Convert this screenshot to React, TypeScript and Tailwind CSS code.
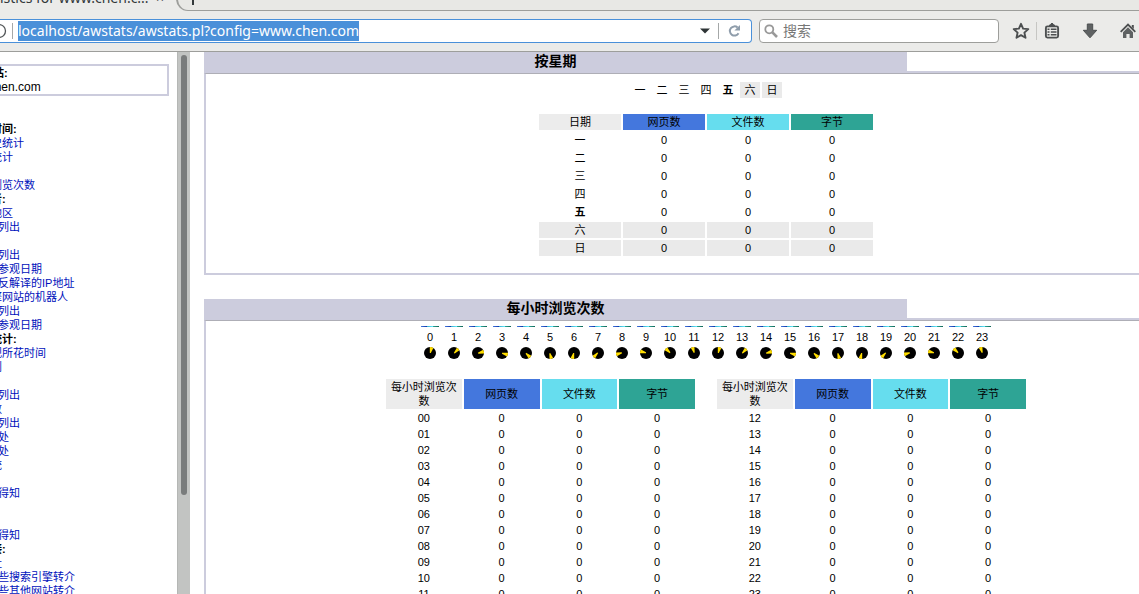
import type { ReactNode } from "react";

const DAYS = ["一", "二", "三", "四", "五", "六", "日"];
const HOURS = Array.from({ length: 24 }, (_, i) => i);

type Entry = { text: string; kind: "title" | "link" | "sub" };

const MENU: Entry[] = [
  { text: "按参观时间:", kind: "title" },
  { text: "按月历史统计", kind: "link" },
  { text: "按日期统计", kind: "link" },
  { text: "按星期", kind: "link" },
  { text: "每小时浏览次数", kind: "link" },
  { text: "按参观者:", kind: "title" },
  { text: "国家或地区", kind: "link" },
  { text: "全部列出", kind: "sub" },
  { text: "主机", kind: "link" },
  { text: "全部列出", kind: "sub" },
  { text: "最近参观日期", kind: "sub" },
  { text: "无法反解译的IP地址", kind: "sub" },
  { text: "搜索引擎网站的机器人", kind: "link" },
  { text: "全部列出", kind: "sub" },
  { text: "最近参观日期", kind: "sub" },
  { text: "浏览器统计:", kind: "title" },
  { text: "每次参观所花时间", kind: "link" },
  { text: "文件类别", kind: "link" },
  { text: "下载", kind: "link" },
  { text: "全部列出", kind: "sub" },
  { text: "浏览次数", kind: "link" },
  { text: "全部列出", kind: "sub" },
  { text: "入站处", kind: "sub" },
  { text: "出站处", kind: "sub" },
  { text: "操作系统", kind: "link" },
  { text: "版本", kind: "sub" },
  { text: "无法得知", kind: "sub" },
  { text: "浏览器", kind: "link" },
  { text: "版本", kind: "sub" },
  { text: "无法得知", kind: "sub" },
  { text: "反相链接:", kind: "title" },
  { text: "来源网址", kind: "link" },
  { text: "由那些搜索引擎转介", kind: "sub" },
  { text: "由那些其他网站转介", kind: "sub" },
];

function Toolbar() {
  return (
    <header className="shrink-0 border-b border-[#9d9e9b] bg-[#ebebe9] font-['Noto_Sans','Noto_Sans_CJK_SC',sans-serif] text-[14px] text-[#33393b]">
      {/* Tab strip */}
      <div className="flex h-[10px] items-end">
        <div className="mb-[2px] flex w-[176px] shrink-0 items-center justify-between pr-3 leading-[20px]">
          <span className="whitespace-nowrap">istics for www.chen.c...</span>
          <button aria-label="关闭标签页" className="text-[14px]">
            ×
          </button>
        </div>
        <div className="-mb-px flex h-[24px] flex-1 items-center rounded-bl-[12px] border-b border-l-2 border-[#9d9e9b] bg-[#e8e8e5] pl-[8px]">
          <button aria-label="新标签页">
            <svg width="14" height="14" viewBox="0 0 14 14">
              <path d="M7 1v12M1 7h12" stroke="#33393b" strokeWidth="2" />
            </svg>
          </button>
        </div>
      </div>

      <div className="flex h-[41px] items-center pr-[2px]">
        <div className="flex h-6 flex-1 items-center rounded-r-sm border border-l-0 border-[#4a90d9] bg-white">
          <svg width="7" height="16" viewBox="0 0 7 16" className="shrink-0">
            <circle cx="-1" cy="8" r="6.5" fill="none" stroke="#505456" strokeWidth="1.3" />
          </svg>
          <span className="mr-[5px] ml-[5px] h-4 w-px bg-[#a5a8a8]" />
          <input
            aria-label="地址"
            defaultValue="localhost/awstats/awstats.pl?config=www.chen.com"
            className="h-5 bg-[#4a90d9] text-white outline-none field-sizing-content"
          />
          <button aria-label="历史" className="ml-auto px-2">
            <svg width="10" height="6" viewBox="0 0 10 6">
              <path d="M0 .5h10L5 5.5z" fill="#2e3436" />
            </svg>
          </button>
          <span className="h-4 w-px bg-[#a5a8a8]" />
          <button aria-label="刷新" className="px-[9px]">
            <svg width="14" height="14" viewBox="0 0 14 14">
              <path d="M10.5 9.2A4.6 4.6 0 1 1 9.6 3.6" fill="none" stroke="#8f9dab" strokeWidth="2" />
              <path d="M12 1v5.6H6.4z" fill="#8f9dab" />
            </svg>
          </button>
        </div>

        <label className="ml-[7px] flex h-6 w-[240px] items-center gap-[5px] rounded-sm border border-[#9d9e9b] bg-white pl-1">
          <svg width="14" height="14" viewBox="0 0 14 14" className="shrink-0">
            <circle cx="5.3" cy="5.3" r="4" fill="none" stroke="#999" strokeWidth="1.8" />
            <path d="M8.4 8.4 13 13" stroke="#999" strokeWidth="2.6" />
          </svg>
          <input aria-label="搜索" placeholder="搜索" className="h-5 w-full leading-[20px] outline-none placeholder:text-[#777]" />
        </label>

        <nav className="ml-[13px] flex items-center">
          <button aria-label="书签">
            <svg width="18" height="18" viewBox="0 0 18 18">
              <path
                d="M9 1.8l2.1 4.8 5.2.5-3.9 3.5 1.1 5.2L9 13.1l-4.5 2.7 1.1-5.2L1.7 7.1l5.2-.5z"
                fill="none"
                stroke="#4c4f50"
                strokeWidth="1.9"
                strokeLinejoin="round"
              />
            </svg>
          </button>
          <span className="mx-[6px] h-[18px] w-px bg-[#c6c6c3]" />
          <button aria-label="书签列表">
            <svg width="18" height="18" viewBox="0 0 18 18">
              <path d="M6 4V3l2-1.2V1h2v.8L12 3v1z" fill="#4c4f50" />
              <rect x="2.9" y="4.4" width="12.2" height="11.2" rx="1.5" fill="none" stroke="#4c4f50" strokeWidth="1.9" />
              <path d="M4.5 7.2h2M4.5 10h2M4.5 12.8h2M7.8 7.2h5.7M7.8 10h5.7M7.8 12.8h5.7" stroke="#4c4f50" strokeWidth="1.4" />
            </svg>
          </button>
          <button aria-label="下载" className="ml-5">
            <svg width="18" height="18" viewBox="0 0 18 18">
              <path d="M6.3 2h5.4v6.3h4L9 15.8 2.3 8.3h4z" fill="#5f6263" stroke="#4c4f50" />
            </svg>
          </button>
          <button aria-label="主页" className="ml-5">
            <svg width="18" height="18" viewBox="0 0 18 18">
              <path d="M1.7 9.8 9 2.6l7.3 7.2" fill="none" stroke="#4c4f50" strokeWidth="1.8" />
              <path d="M12.8 3h2v4l-2-2z" fill="#4c4f50" />
              <path d="M4 10.3l5-5 5 5V16h-3.4v-4H7.4v4H4z" fill="#5f6263" />
            </svg>
          </button>
        </nav>
      </div>
    </header>
  );
}

function Sidebar() {
  return (
    <aside className="flex w-[190px] shrink-0">
      <div className="flex-1 overflow-hidden whitespace-nowrap">
        <div className="mt-3 mr-2 h-8 border-2 border-l-0 border-[#ccccdd] leading-[14px]">
          <div className="-ml-10">
            <p className="font-bold">统计网站:</p>
            <p className="text-[12px]">www.chen.com</p>
          </div>
        </div>
        <ul className="mt-[26px] -ml-[42px]">
          {MENU.map((entry, index) => (
            <li key={index} className={entry.kind === "sub" ? "pl-[18px]" : ""}>
              {entry.kind === "title" ? (
                <b>{entry.text}</b>
              ) : (
                <a href="#" className="text-[#0011bb]">
                  {entry.text}
                </a>
              )}
            </li>
          ))}
        </ul>
      </div>
      {/* Scrollbar */}
      <div className="w-[13px] border-l border-[#b5b7b5] bg-[#c2c4c2] px-[3px] pt-[3px]">
        <div className="h-[440px] rounded-full bg-[#797c7c]" />
      </div>
    </aside>
  );
}

function Section({ title, children }: { title: string; children: ReactNode }) {
  return (
    <section>
      <div className="flex h-[21px] items-end">
        <h2 className="h-full w-[70%] bg-[#ccccdd] text-center text-[14px] leading-[19px] font-bold">{title}</h2>
        <div className="h-[2px] flex-1 bg-[#ccccdd]" />
      </div>
      <div className="border-2 border-t border-[#ccccdd] border-t-[#aeaeb6]">{children}</div>
    </section>
  );
}

function HeadCells({ first }: { first: string }) {
  return (
    <tr>
      <th className="bg-[#ececec] p-px font-normal">{first}</th>
      <th className="bg-[#4477dd] p-px font-normal">网页数</th>
      <th className="bg-[#66ddee] p-px font-normal">文件数</th>
      <th className="bg-[#2ea495] p-px font-normal">字节</th>
    </tr>
  );
}

function WeekStats() {
  return (
    <div className="flex flex-col items-center pt-2 pb-[15px]">
      <div className="flex gap-[2px] text-center">
        {DAYS.map((day, i) => (
          <span key={day} className={`w-5 py-px ${i > 4 ? "bg-[#eaeaea]" : ""} ${i === 4 ? "font-bold" : ""}`}>
            {day}
          </span>
        ))}
      </div>
      <table className="mt-[14px] w-[338px] table-fixed border-separate border-spacing-[2px] text-center">
        <thead>
          <HeadCells first="日期" />
        </thead>
        <tbody>
          {DAYS.map((day, i) => (
            <tr key={day} className={i > 4 ? "bg-[#eaeaea]" : ""}>
              <td className={i === 4 ? "p-px font-bold" : "p-px"}>{day}</td>
              <td>0</td>
              <td>0</td>
              <td>0</td>
            </tr>
          ))}
        </tbody>
      </table>
    </div>
  );
}

function Clock({ hour }: { hour: number }) {
  return (
    <svg width="12" height="12" viewBox="0 0 12 12">
      <circle cx="6" cy="6" r="6" fill="#000" />
      <path d="M5.8 6V0A6 6 0 0 1 9.4 1L6.8 6z" fill="#ffdd00" transform={`rotate(${(hour % 12) * 30} 6 6)`} />
    </svg>
  );
}

function HourTable({ hours }: { hours: number[] }) {
  return (
    <table className="w-[313px] table-fixed border-separate border-spacing-[2px] text-center">
      <thead>
        <HeadCells first="每小时浏览次数" />
      </thead>
      <tbody>
        {hours.map((hour) => (
          <tr key={hour}>
            <td>{String(hour).padStart(2, "0")}</td>
            <td>0</td>
            <td>0</td>
            <td>0</td>
          </tr>
        ))}
      </tbody>
    </table>
  );
}

function HourStats() {
  return (
    <div className="flex flex-col items-center pt-[5px]">
      <div className="flex">
        {HOURS.map((hour) => (
          <div key={hour} className="flex w-6 flex-col items-center">
            <div className="flex h-px w-[18px]">
              <span className="flex-1 bg-linear-to-r from-[#4477dd] to-[#1133aa]" />
              <span className="flex-1 bg-linear-to-r from-[#33aacc] to-[#66eeff]" />
              <span className="flex-1 bg-linear-to-r from-[#2ea495] to-[#116655]" />
            </div>
            <span className="mt-[3px] mb-[3px]">{hour}</span>
            <Clock hour={hour} />
          </div>
        ))}
      </div>
      <div className="mt-[18px] flex gap-[18px]">
        <HourTable hours={HOURS.slice(0, 12)} />
        <HourTable hours={HOURS.slice(12)} />
      </div>
    </div>
  );
}

export default function App() {
  return (
    <div className="flex h-screen flex-col overflow-hidden bg-white font-['Liberation_Sans','Noto_Sans_CJK_SC',sans-serif] text-[11px] leading-[14px] text-black">
      <Toolbar />
      <div className="flex min-h-0 flex-1">
        <Sidebar />
        {/* The report is wider than the frame and runs past its right edge */}
        <main className="-mr-[69px] ml-[14px] flex flex-1 flex-col gap-6">
          <Section title="按星期">
            <WeekStats />
          </Section>
          <Section title="每小时浏览次数">
            <HourStats />
          </Section>
        </main>
      </div>
    </div>
  );
}
